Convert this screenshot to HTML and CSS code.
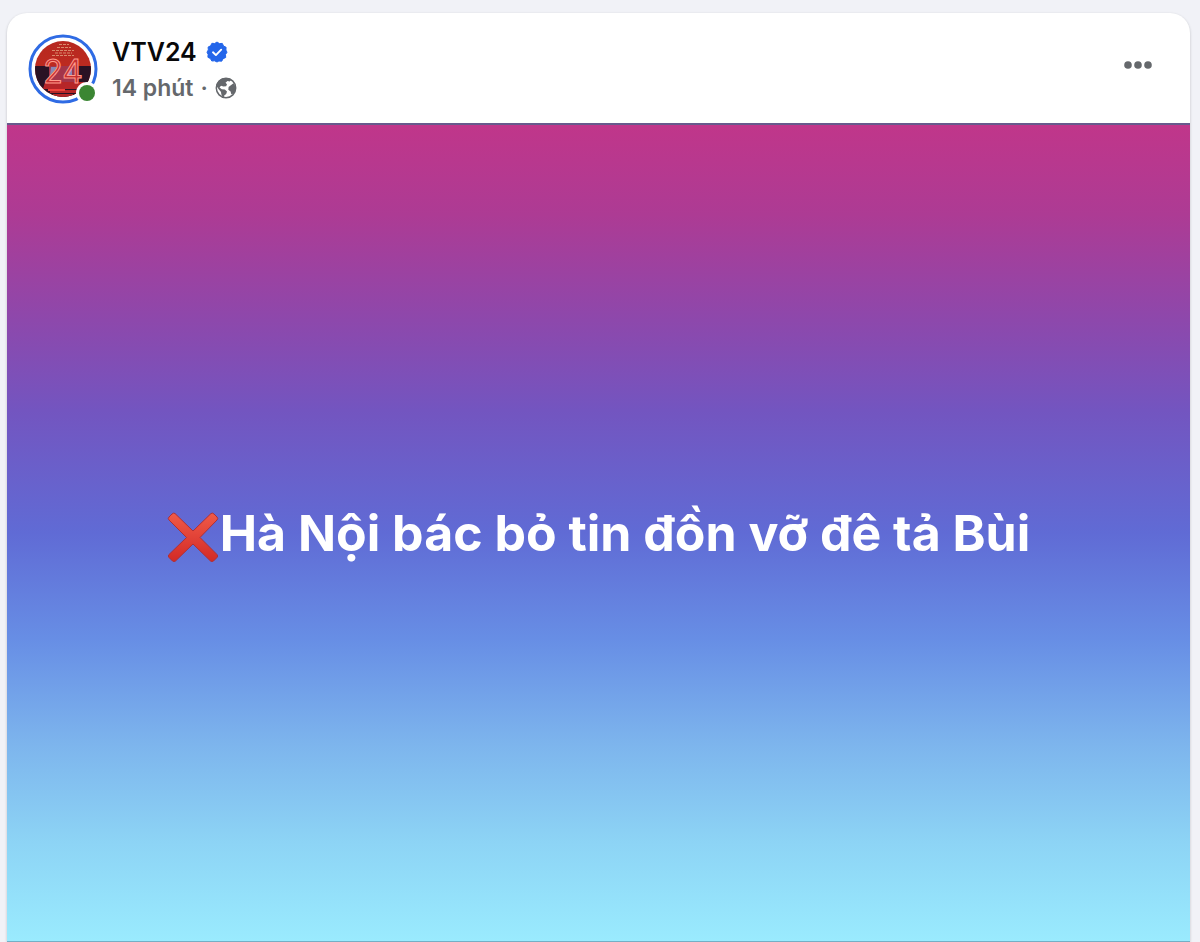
FILE: index.html
```html
<!DOCTYPE html>
<html lang="vi">
<head>
  <meta charset="UTF-8">
  <meta name="viewport" content="width=device-width, initial-scale=1.0">
  <title>VTV24</title>
  <link rel="stylesheet" href="styles.css">
</head>
<body>
  <article class="post">
    <!-- Post header -->
    <header class="post-header">
      <a class="avatar" href="#" aria-label="VTV24">
        <svg viewBox="0 0 70 70" width="70" height="70" aria-hidden="true">
          <defs>
            <clipPath id="avatarClip"><circle cx="35" cy="35" r="28"/></clipPath>
            <linearGradient id="avatarRed" x1="0" y1="0" x2="0" y2="1">
              <stop offset="0" stop-color="#b52820"/>
              <stop offset="1" stop-color="#c52d20"/>
            </linearGradient>
          </defs>
          <circle cx="35" cy="35" r="33" fill="#fff" stroke="#2f6be4" stroke-width="3"/>
          <g clip-path="url(#avatarClip)">
            <rect width="70" height="70" fill="url(#avatarRed)"/>
            <rect y="32" width="70" height="38" fill="#2a1224"/>
            <rect x="21" y="32" width="28" height="17" fill="#a3354a"/>
            <path d="M23 33h9l-5 8h-5zM39 35h5v6h-6z" fill="#8a87b5"/>
            <path d="M17 48h39v7H15zM22 56h28v3H22zM25 60h20v4H25z" fill="#b62628"/>
            <path d="M20 56h17" stroke="#f0443c" stroke-width="2"/>
            <path d="M31 10.500h10M29 13.500h14M24 16.500h22M27 19h17M24 21.500h22" stroke="#d98a6c" stroke-width="1" stroke-dasharray="3 1"/>
            <text class="avatar-logo" x="35" y="49" text-anchor="middle">24</text>
          </g>
          <circle cx="59" cy="59" r="11" fill="#fff"/>
          <circle cx="59" cy="59" r="8" fill="#3b8633"/>
        </svg>
      </a>
      <div class="post-info">
        <div class="name-row">
          <a class="name" href="#">VTV24</a>
          <svg class="verified" viewBox="0 0 22 22" width="22" height="22" role="img" aria-label="Verified">
            <path d="M11 1l2.400 1.600 2.900-.2 1.200 2.600 2.600 1.300-.2 2.800L21 11.200l-1.500 2.400.2 2.900-2.600 1.200-1.400 2.500-2.800-.2L11 21l-2.400-1.200-2.800.2-1.400-2.500-2.500-1.200.2-2.900L1 11.200l1.300-2.300-.2-2.800 2.500-1.300 1.300-2.500 2.800.2z" fill="#2466ea" stroke="#2466ea" stroke-linejoin="round"/>
            <path d="M7 11.300l2.900 2.800 5.300-5.400" fill="none" stroke="#fff" stroke-width="1.900" stroke-linecap="round" stroke-linejoin="round"/>
          </svg>
        </div>
        <div class="meta-row">
          <a class="time" href="#">14 phút</a>
          <span class="dot">·</span>
          <svg class="globe" viewBox="0 0 22 22" width="22" height="22" role="img" aria-label="Public">
            <circle cx="11" cy="11" r="9.700" fill="#fff" stroke="#65686c" stroke-width="1.500"/>
            <path d="M1.500 9C2 4 6 1 11 1c2.500 0 4 .5 5.500 1.500l-1.700 2-2.300-.5-2 1.700 1.500 1.600-.8 2-2.700.3-2.500-.8-1.500 1.700 2.300 1.700 3 .3 2.200 2-.8 2.400-2 1.500-.4 2.800C7.500 20.500 6 17.500 6 15L3.500 12z" fill="#65686c"/>
            <path d="M15.500 8.400l3-2.200L20.300 9l.4 3.500-1.800 4-2.600.8-.7-2.800-2.300-1.800.3-2.800z" fill="#65686c"/>
          </svg>
        </div>
      </div>
      <button class="more-button" type="button" aria-label="More">
        <svg viewBox="0 0 30 10" width="30" height="10" aria-hidden="true">
          <circle cx="5" cy="5" r="3.800"/>
          <circle cx="15" cy="5" r="3.800"/>
          <circle cx="25" cy="5" r="3.800"/>
        </svg>
      </button>
    </header>

    <!-- Post content -->
    <div class="post-body">
      <p class="post-text">
        <svg class="cross" viewBox="0 0 52 52" width="52" height="52" role="img" aria-label="❌">
          <defs>
            <linearGradient id="crossRed" x1="0" y1="0" x2="0" y2="1">
              <stop offset="0" stop-color="#f05a48"/>
              <stop offset="1" stop-color="#d32a26"/>
            </linearGradient>
          </defs>
          <path d="M8 2.500L26 20 44 2.500q1.500-1 3 .5l3 3q1.500 1.500 0 3L33 26.500l17 17q1.500 1.500 0 3l-3.500 3.500q-1.500 1-3 0L26 33 8.500 50q-1.500 1-3 0L2 46.500q-1.500-1.500 0-3l17.500-17L2 9q-1.500-1.500 0-3l3-3q1.500-1.500 3-.5z" fill="url(#crossRed)" stroke="#ad3038" stroke-width="1"/>
        </svg>
        <span>Hà Nội bác bỏ tin đồn vỡ đê tả Bùi</span>
      </p>
    </div>
  </article>
</body>
</html>
```
FILE: styles.css
```css
* {
  box-sizing: border-box;
}
body {
  margin: 0;
  padding: 13px 10px 0 7px;
  min-height: 100vh;
  display: flex;
  background-color: #f1f2f7;
  font-family: Inter, "Liberation Sans", sans-serif;
}
a {
  color: inherit;
  text-decoration: none;
}
.post {
  flex: 1;
  display: flex;
  flex-direction: column;
  background-color: #fff;
  border-radius: 20px 20px 0 0;
  box-shadow: 0 1px 3px rgba(0, 0, 0, 0.2);
  overflow: hidden;
}

/* Header */
.post-header {
  display: flex;
  align-items: flex-start;
  padding: 21px 37px 17px 21px;
}
.avatar {
  display: block;
  height: 70px;
}
.avatar svg {
  display: block;
}
.avatar-logo {
  font-family: Inter, sans-serif;
  font-size: 32px;
  font-weight: 400;
  fill: #c52f30;
  stroke: #ff9c8c;
  stroke-width: 1px;
}
.post-info {
  flex: 1;
  margin-left: 14px;
}
.name-row, .meta-row {
  display: flex;
  align-items: center;
}
.name-row {
  height: 36px;
  gap: 9px;
}
.name {
  font-size: 25px;
  font-weight: 600;
  color: #080809;
}
.meta-row {
  height: 36px;
  gap: 7px;
  color: #65686c;
  font-size: 23px;
  font-weight: 600;
}
.more-button {
  margin-top: 16px;
  padding: 10px 0;
  border: none;
  background: none;
  line-height: 0;
  cursor: pointer;
}
.more-button svg {
  fill: #65686c;
}

/* Coloured background with the big text */
.post-body {
  flex: 1;
  display: flex;
  align-items: center;
  justify-content: center;
  padding: 0 20px;
  border-top: 2px solid #675a8c;
  border-bottom: 1px solid #74afc5;
  background: linear-gradient(#c0368a 0%, #ad3b94 11%, #8d48ac 24%, #7355c0 35%, #606bd5 50%, #678ee5 63%, #7db5ed 76%, #8dd4f5 88%, #9aebfe 100%);
}
.post-text {
  display: flex;
  align-items: center;
  gap: 1px;
  margin: 0;
  color: #fff;
  font-size: 50px;
  font-weight: 700;
  line-height: 64px;
}
.cross {
  flex: none;
  margin-top: 8px;
}
```
